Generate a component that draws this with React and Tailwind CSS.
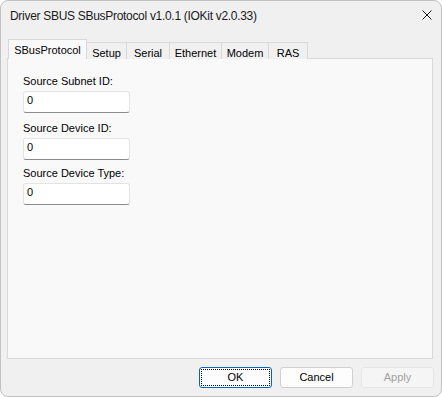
import React from "react";

const tabs = [
  { label: "Setup", w: "w-[39px]", border: "" },
  { label: "Serial", w: "w-[43px]", border: "border-l" },
  { label: "Ethernet", w: "w-[52px]", border: "border-l" },
  { label: "Modem", w: "w-[47px]", border: "border-l" },
  { label: "RAS", w: "w-[40px]", border: "border-l border-r" },
];

function Field({ label, className }) {
  return (
    <div className={"flex flex-col " + className}>
      <div className="leading-[13px] h-[13px] text-[#000]">{label}</div>
      <div className="mt-[3px] w-[107px] h-[22px] bg-white border border-[#e3e3e3] border-b-[#8c8c8c] rounded-[3px] pl-[3px] pt-[2px] leading-[13px] text-[#000]">
        0
      </div>
    </div>
  );
}

export default function App() {
  return (
    <div className="w-[442px] h-[397px] font-['Liberation_Sans',Arial,sans-serif] text-[11px] text-black">
      <div className="w-[442px] h-[397px] rounded-[8px] border border-[#c2c2c2] bg-[#f0f0f0] flex flex-col overflow-hidden">
        <div className="flex items-start justify-between h-[31px] shrink-0">
          <span className="ml-[9px] mt-[8px] text-[12px] tracking-[-0.3px] leading-[14px] text-[#1a1a1a]">
            Driver SBUS SBusProtocol v1.0.1 (IOKit v2.0.33)
          </span>
          <svg className="mt-[9px] mr-[9px]" width="10" height="10" viewBox="0 0 10 10">
            <path d="M0.5 0.5 L9.5 9.5 M9.5 0.5 L0.5 9.5" stroke="#1a1a1a" strokeWidth="1" fill="none" />
          </svg>
        </div>
        <div className="mt-[7px] pl-[7px] flex items-end h-[20px] relative z-10 shrink-0">
          <div className="w-[79px] h-[20px] border-l border-t border-r border-[#d9d9d9] bg-[#f9f9f9] text-center pt-[4px] leading-[13px]">
            SBusProtocol
          </div>
          {tabs.map((t) => (
            <div
              key={t.label}
              className={
                t.w +
                " " +
                t.border +
                " h-[17px] border-t border-[#d9d9d9] bg-[#f0f0f0] text-center pt-[4px] leading-[13px]"
              }
            >
              {t.label}
            </div>
          ))}
        </div>
        <div className="-mt-[1px] ml-[6px] w-[426px] h-[301px] shrink-0 border border-[#d9d9d9] bg-[#f9f9f9] pl-[15px] pt-[16px] flex flex-col">
          <Field label="Source Subnet ID:" className="" />
          <Field label="Source Device ID:" className="mt-[9px]" />
          <Field label="Source Device Type:" className="mt-[7px]" />
        </div>
        <div className="mt-[8px] flex justify-end gap-[8px] pr-[7px]">
          <div className="relative w-[73px] h-[21px] rounded-[3px] border border-[#0067c0] bg-[#fdfdfd] flex items-center justify-center leading-[13px]">
            <span className="absolute inset-[1px] border border-dotted border-black"></span>
            OK
          </div>
          <div className="w-[73px] h-[21px] rounded-[3px] border border-[#d0d0d0] bg-[#fdfdfd] flex items-center justify-center leading-[13px]">
            Cancel
          </div>
          <div className="w-[73px] h-[21px] rounded-[3px] border border-[#e5e5e5] bg-[#f5f5f5] flex items-center justify-center leading-[13px] text-[#a0a0a0]">
            Apply
          </div>
        </div>
      </div>
    </div>
  );
}
